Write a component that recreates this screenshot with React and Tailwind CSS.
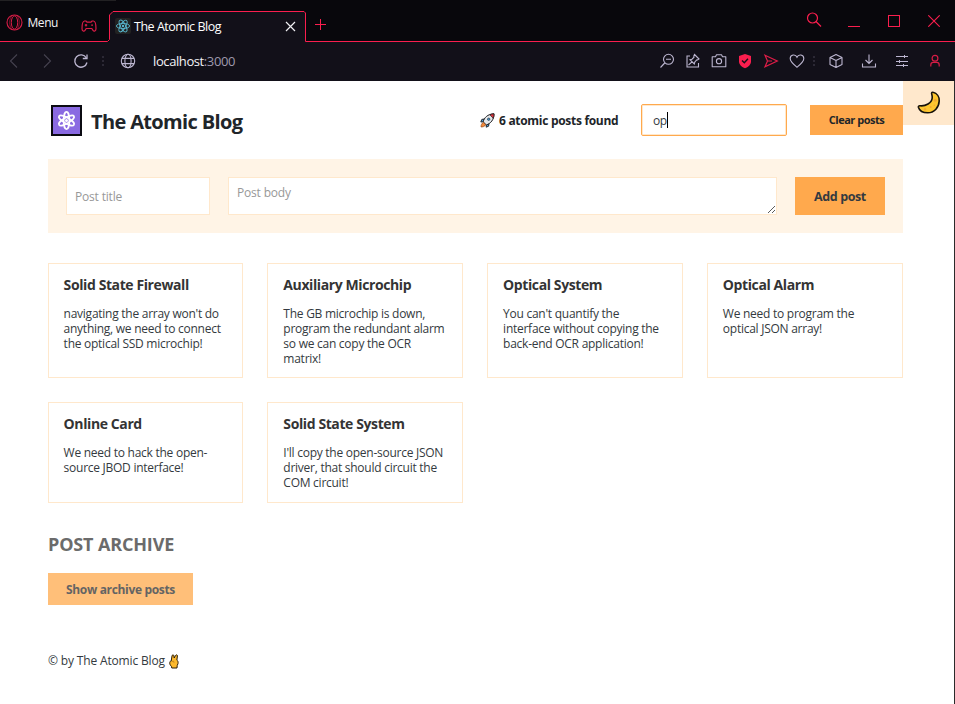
const posts = [
  {
    title: "Solid State Firewall",
    body: "navigating the array won't do\nanything, we need to connect\nthe optical SSD microchip!",
  },
  {
    title: "Auxiliary Microchip",
    body: "The GB microchip is down,\nprogram the redundant alarm\nso we can copy the OCR\nmatrix!",
  },
  {
    title: "Optical System",
    body: "You can't quantify the\ninterface without copying the\nback-end OCR application!",
  },
  {
    title: "Optical Alarm",
    body: "We need to program the\noptical JSON array!",
  },
  {
    title: "Online Card",
    body: "We need to hack the open-\nsource JBOD interface!",
  },
  {
    title: "Solid State System",
    body: "I'll copy the open-source JSON\ndriver, that should circuit the\nCOM circuit!",
  },
];

function Icon({ size = 16, className = "", children, w = 1 }) {
  return (
    <svg
      width={size}
      height={size}
      viewBox="0 0 16 16"
      fill="none"
      stroke="currentColor"
      strokeWidth={w}
      className={"block shrink-0 " + className}
    >
      {children}
    </svg>
  );
}

function ReactLogo() {
  return (
    <svg width="16" height="16" viewBox="0 0 16 16" className="block shrink-0 rounded-[2px] bg-[#222222]" fill="none" stroke="#58b8d0" strokeWidth="0.9">
      <ellipse cx="8" cy="8" rx="6.6" ry="2.6" />
      <ellipse cx="8" cy="8" rx="6.6" ry="2.6" transform="rotate(60 8 8)" />
      <ellipse cx="8" cy="8" rx="6.6" ry="2.6" transform="rotate(120 8 8)" />
      <circle cx="8" cy="8" r="1.2" fill="#58b8d0" stroke="none" />
    </svg>
  );
}

function AtomEmoji() {
  return (
    <svg width="31" height="31" viewBox="0 0 31 31" className="block shrink-0" fill="none">
      <rect x="1" y="1" width="29" height="29" fill="#8a6ae2" stroke="#0b0b12" strokeWidth="2" />
      <g stroke="#ffffff" strokeWidth="1.7">
        <ellipse cx="15.5" cy="15.5" rx="2.9" ry="8.6" />
        <ellipse cx="15.5" cy="15.5" rx="2.9" ry="8.6" transform="rotate(60 15.5 15.5)" />
        <ellipse cx="15.5" cy="15.5" rx="2.9" ry="8.6" transform="rotate(120 15.5 15.5)" />
      </g>
      <circle cx="15.5" cy="15.5" r="1.5" fill="#ffffff" />
    </svg>
  );
}

function Rocket() {
  return (
    <svg width="15" height="15" viewBox="0 0 15 15" className="mt-px block shrink-0" strokeLinejoin="round">
      <path d="M4.2 6 L1.8 6.4 L0.8 9 L3.4 8.8 Z M9 10.6 L8.6 13.2 L6.2 14.2 L6.3 11.8 Z" fill="#4aa3df" stroke="#1b1b1f" strokeWidth="0.9" />
      <path d="M3.2 8.8 C4 5 7.5 1 14 0.8 C14.2 6.5 10.5 10.8 6.3 11.9 Z" fill="#e4e8ec" stroke="#1b1b1f" strokeWidth="1" />
      <path d="M9.8 1.8 C11 1.2 12.5 0.9 14 0.8 C14.1 2.5 13.8 4 13.2 5.3 Z" fill="#d8333c" stroke="#1b1b1f" strokeWidth="0.7" />
      <circle cx="8.7" cy="6.2" r="1.2" fill="#4aa3df" stroke="#1b1b1f" strokeWidth="0.6" />
      <path d="M3.4 9.4 L5.7 11.7 C4.8 13.6 2.8 14 1 14 C1 12.2 1.5 10.2 3.4 9.4 Z" fill="#f18a3a" stroke="#8a3d10" strokeWidth="0.6" />
    </svg>
  );
}

function Moon() {
  return (
    <svg width="24" height="24" viewBox="0 0 24 24" className="block shrink-0">
      <path
        d="M16 1.3 C20 2.2 22.5 5.7 22.2 10 C21.9 16.8 17 21.8 10.8 21.8 C6 21.8 2.4 19.6 1.4 16.2 C1.2 15.2 2 14.6 3 14.8 C8.5 15.5 14.8 12 15.2 7 C15.4 4.8 14.8 3.8 14.6 2.4 C14.6 1.5 15.2 1.1 16 1.3 Z"
        fill="#fdc62f"
        stroke="#15110a"
        strokeWidth="1.6"
        strokeLinejoin="round"
      />
      <circle cx="18.3" cy="9.3" r="1.5" fill="#f3a632" />
      <circle cx="13.6" cy="16" r="1" fill="#f3a632" />
      <circle cx="8" cy="18.3" r="1.2" fill="#f3a632" />
      <circle cx="17.4" cy="14.2" r="0.8" fill="#f3a632" />
    </svg>
  );
}

function VictoryHand() {
  return (
    <svg width="10" height="15" viewBox="0 0 10 15" className="block shrink-0" strokeLinejoin="round">
      <path
        d="M2.2 7 L3 2 C3.1 0.6 4.7 0.5 4.9 1.7 L5.2 4 L6.6 1.4 C7.1 0.4 8.7 0.9 8.4 2 L7.9 6.2 C9 6.8 9.3 8 9 9.6 L8.2 11.6 L8 14 L2.8 14 L2.4 12.4 C1 11 0.5 9.6 0.8 8.4 C1 7.4 1.5 7 2.2 7 Z"
        fill="#fdb92c"
        stroke="#2a1c08"
        strokeWidth="1"
      />
      <path d="M2.6 7.6 L4.6 7.2 L5 8.8" fill="none" stroke="#a86d18" strokeWidth="0.6" />
    </svg>
  );
}

function TabBar() {
  return (
    <div className="relative h-[42px] bg-[#08070c] text-[#fa1e4e]">
      <svg width="955" height="42" viewBox="0 0 955 42" className="absolute inset-0" fill="none">
        <path d="M0 0.5 H116" stroke="#222123" />
        <path d="M109.5 42 V15 L113 11.5 H304 L305.5 13 V42 Z" fill="#121019" />
        <path d="M0 41.5 H107.5 L109.5 39.5 V15 L113 11.5 H304 L305.5 13 V41.5 H955" stroke="#fa1e4e" />
      </svg>
      <div className="relative flex h-[42px] items-start">
        <svg width="17" height="17" viewBox="0 0 17 17" className="mt-[13.5px] ml-[5.5px] block shrink-0" fill="none" stroke="#d81c46">
          <circle cx="8.5" cy="8.5" r="7.5" strokeWidth="1.1" />
          <ellipse cx="8.5" cy="8.5" rx="3.2" ry="6.6" strokeWidth="1" />
          <path d="M6.5 1.5 C2.8 4 2.8 13 6.5 15.5 M10.5 1.5 C14.2 4 14.2 13 10.5 15.5" strokeWidth="0.6" />
        </svg>
        <span className="mt-[15px] ml-[5px] w-[51px] text-[12px] leading-[16px] tracking-[-0.45px] text-[#f3f2f5]">Menu</span>
        <svg width="16" height="13" viewBox="0 0 16 13" className="mt-[20px] ml-[2.5px] block shrink-0" fill="none" stroke="#d81c46" strokeWidth="1.2">
          <path d="M3.5 1 L5 1 L6 2.2 H10 L11 1 H12.5 C14 1.2 15 5 15 8.5 C15 11.3 13 11.8 12 10.3 L10.8 8.5 H5.2 L4 10.3 C3 11.8 1 11.3 1 8.5 C1 5 2 1.2 3.5 1 Z" />
          <path d="M5 4 V6.4 M3.8 5.2 H6.2 M10.2 5.2 H12" />
        </svg>
        <div className="mt-[18px] ml-[18px] flex h-4 w-[181px] items-center">
          <ReactLogo />
          <span className="mt-[2px] ml-[3px] flex-1 text-[12.5px] leading-[16px] tracking-[-0.48px] whitespace-nowrap text-white">The Atomic Blog</span>
          <svg width="11" height="11" viewBox="0 0 11 11" className="block" stroke="#f0eff3" strokeWidth="1.2">
            <path d="M1 1 L10 10 M10 1 L1 10" />
          </svg>
        </div>
        <svg width="11" height="11" viewBox="0 0 11 11" className="mt-[19px] ml-[19px] block shrink-0" stroke="#fa1e4e">
          <path d="M5.5 0 V11 M0 5.5 H11" />
        </svg>
        <div className="ml-auto flex h-10 items-start pr-[15px]">
          <svg width="16" height="16" viewBox="0 0 16 16" className="mt-[12px] block" fill="none" stroke="currentColor" strokeWidth="1.2">
            <circle cx="6.5" cy="6" r="5" />
            <path d="M10 9.5 L15 14.5" />
          </svg>
          <div className="mt-[26px] ml-[26px] h-px w-3 bg-[#fa1e4e]" />
          <div className="mt-[15px] ml-[28px] h-3 w-3 border border-[#fa1e4e]" />
          <svg width="12" height="12" viewBox="0 0 12 12" className="mt-[15px] ml-7 block" stroke="currentColor" strokeWidth="1.1">
            <path d="M0.3 0.3 L11.7 11.7 M11.7 0.3 L0.3 11.7" />
          </svg>
        </div>
      </div>
    </div>
  );
}

function Dots() {
  return (
    <svg width="2" height="12" viewBox="0 0 2 12" className="block shrink-0" fill="#2c2935">
      <path d="M0 1h2v2h-2z M0 5h2v2h-2z M0 9h2v2h-2z" />
    </svg>
  );
}

function AddressBar() {
  return (
    <div className="flex h-[39px] items-center bg-[#121019] pb-px pl-[6px] text-[#bcb6d0]">
      <Icon className="text-[#45424f]" w={1.1}><path d="M11 1.5 L4.5 8 L11 14.5" /></Icon>
      <Icon className="ml-[18px] text-[#45424f]" w={1.1}><path d="M4 1.5 L10.5 8 L4 14.5" /></Icon>
      <Icon className="ml-[17px]" w={1.3}>
        <path d="M13.3 4.8 A6.2 6.2 0 1 0 14 9.5" />
        <path d="M14 1.5 V5.5 H9.8" />
      </Icon>
      <div className="ml-[13px]"><Dots /></div>
      <Icon className="ml-[16px]" w={1.1}>
        <circle cx="8" cy="8" r="6.7" />
        <ellipse cx="8" cy="8" rx="3.1" ry="6.7" />
        <path d="M2 5.4 H14 M2 10.6 H14" />
      </Icon>
      <span className="ml-[17px] flex-1 text-[13px] leading-[18px] tracking-[-0.4px] text-[#f4f3f7]">
        localhost<span className="text-[#9e99ad]">:3000</span>
      </span>
      <div className="flex items-center pr-[12px]">
        <Icon w={1.1}><circle cx="9.5" cy="6.3" r="5" /><path d="M5.7 10 L1.5 14.5 M7 6.3 H12" /></Icon>
        <Icon className="ml-[10px]" w={1.1}>
          <path d="M5 3 H2 V14 H13.5 V10 M9.5 1.5 L14 6 L12.5 7 L11.8 6.8 L9.8 9 L9.3 11 L5 6.7 L7 6.2 L9 4.2 L8.8 3 Z M7 8.8 L3.5 12" />
        </Icon>
        <Icon className="ml-[10px]" w={1.1}>
          <path d="M1.2 3.8 H4.5 L5.5 1.8 H10.5 L11.5 3.8 H14.8 V13.8 H1.2 Z" strokeLinejoin="round" />
          <circle cx="8" cy="8.2" r="2.6" />
        </Icon>
        <Icon className="ml-[10px] text-[#fa1e4e]">
          <path d="M8 1 L14 3 V8.5 C14 12 11 14 8 15.2 C5 14 2 12 2 8.5 V3 Z" fill="currentColor" stroke="none" />
          <path d="M5 7.6 L7.3 9.8 L11 5.8" stroke="#121019" strokeWidth="1.4" />
        </Icon>
        <Icon className="ml-[10px] text-[#e01d48]" w={1.2}><path d="M2 2.2 L14.3 8 L2 13.8 L4.5 8 Z M4.5 8 H9" /></Icon>
        <Icon className="ml-[10px]" w={1.1}>
          <path d="M8 14.2 C4.5 11.5 1.2 9 1.2 5.6 C1.2 1.4 6.5 0.7 8 4.2 C9.5 0.7 14.8 1.4 14.8 5.6 C14.8 9 11.5 11.5 8 14.2 Z" />
        </Icon>
        <div className="ml-[8px]"><Dots /></div>
        <Icon className="ml-[13px]" w={1.1}>
          <path d="M8 1.5 L14 4.5 V11.5 L8 14.5 L2 11.5 V4.5 Z M2 4.5 L8 7.5 L14 4.5 M8 7.5 V14.5" strokeLinejoin="round" />
        </Icon>
        <Icon className="ml-[17px]" w={1.1}><path d="M8 1.5 V10.5 M4.5 7 L8 10.5 L11.5 7 M1.5 10.5 V14 H14.5 V10.5" /></Icon>
        <Icon className="ml-[17px]"><path d="M2 3.5 H14 M2 8.5 H14 M2 12.5 H14 M10.5 2 V5 M5.5 7 V10 M9.5 11 V14" /></Icon>
        <Icon className="ml-[17px] text-[#d81c46]" w={1.2}>
          <circle cx="8" cy="5.3" r="2.9" />
          <path d="M3.8 13.5 V12 C3.8 10.2 5.2 9.4 6.2 9.4 H9.8 C10.8 9.4 12.2 10.2 12.2 12 V13.5" />
        </Icon>
      </div>
    </div>
  );
}

function Header() {
  return (
    <header className="flex h-8 items-center">
      <div className="ml-[3px]"><AtomEmoji /></div>
      <h1 className="ml-[9px] flex-1 pt-[3px] text-[20px] leading-[28px] font-bold tracking-[-0.65px] text-[#212529]">The Atomic Blog</h1>
      <Rocket />
      <p className="ml-1 w-[142px] pt-[2px] text-[12px] leading-[16px] font-bold tracking-[-0.3px] whitespace-nowrap text-[#212529]">6 atomic posts found</p>
      <div className="flex h-8 w-[146px] items-center rounded-[2px] border border-[#ffa94d] bg-white pl-[11px] text-[12px] text-[#343a40] shadow-[inset_0_0_0_1px_#ffe8cc]">
        <span className="pt-px tracking-[-0.4px]">op</span>
        <span className="h-4 w-px bg-black" />
      </div>
      <button className="ml-[23px] h-[30px] w-[93px] bg-[#ffa94d] text-[11px] font-bold tracking-[-0.5px] text-[#212529]">Clear posts</button>
    </header>
  );
}

function AddPostForm() {
  return (
    <section className="mt-[23px] flex h-[74px] gap-[18px] bg-[#fff4e6] p-[18px] text-[12px] tracking-[-0.18px] text-[#989898]">
      <div className="flex w-36 items-center border border-[#ffe8cc] bg-white pt-[2px] pl-[8px]">Post title</div>
      <div className="relative flex-1 border border-[#ffe8cc] bg-white pt-[6px] pl-[8px] leading-[18px]">
        Post body
        <svg width="9" height="9" viewBox="0 0 9 9" className="absolute right-0 bottom-0" stroke="#4a4a4a" strokeWidth="0.9">
          <path d="M1 8 L8 1 M5 8 L8 5" />
        </svg>
      </div>
      <button className="w-[90px] bg-[#ffa94d] pt-[2px] text-[12.5px] font-bold tracking-[-0.4px] text-[#343a40]">Add post</button>
    </section>
  );
}

function PostCard({ post }) {
  return (
    <li className="border border-[#ffe8cc] pt-3 pl-[15px]">
      <h3 className="text-[14px] leading-[18px] font-bold tracking-[-0.4px] whitespace-nowrap text-[#343434]">{post.title}</h3>
      <p className="mt-3 text-[12px] leading-[15px] tracking-[-0.26px] whitespace-pre text-[#343a40]">{post.body}</p>
    </li>
  );
}

export default function App() {
  return (
    <div className="h-[704px] w-[955px] overflow-hidden bg-white font-['Open_Sans','Noto_Sans',sans-serif]">
      <TabBar />
      <AddressBar />
      <div className="relative h-[623px] border-r border-[#2b2b2b] pt-[23px] pr-[51px] pl-12">
        <button className="absolute top-0 right-0 flex h-11 w-[51px] items-center justify-center bg-[#ffe8cc]"><Moon /></button>
        <Header />
        <AddPostForm />
        <ul className="mt-[30px] mr-[0.4px] -ml-[0.4px] grid grid-cols-4 grid-rows-[115px_101px] gap-6">
          {posts.map((post) => <PostCard key={post.title} post={post} />)}
        </ul>
        <aside className="mt-[29px]">
          <h2 className="text-[18px] leading-[24px] font-bold tracking-[-0.15px] text-[#6b6b6b]">POST ARCHIVE</h2>
          <button className="mt-[17px] block h-8 w-[145px] bg-[#ffbf79] pt-[2px] text-[12px] font-bold tracking-[-0.33px] text-[#646464]">Show archive posts</button>
        </aside>
        <footer className="mt-[46px] flex items-center text-[12px] leading-[20px] text-[#343a40]">
          <span className="w-[121px] tracking-[-0.16px] whitespace-nowrap">© by The Atomic Blog</span>
          <VictoryHand />
        </footer>
      </div>
    </div>
  );
}
